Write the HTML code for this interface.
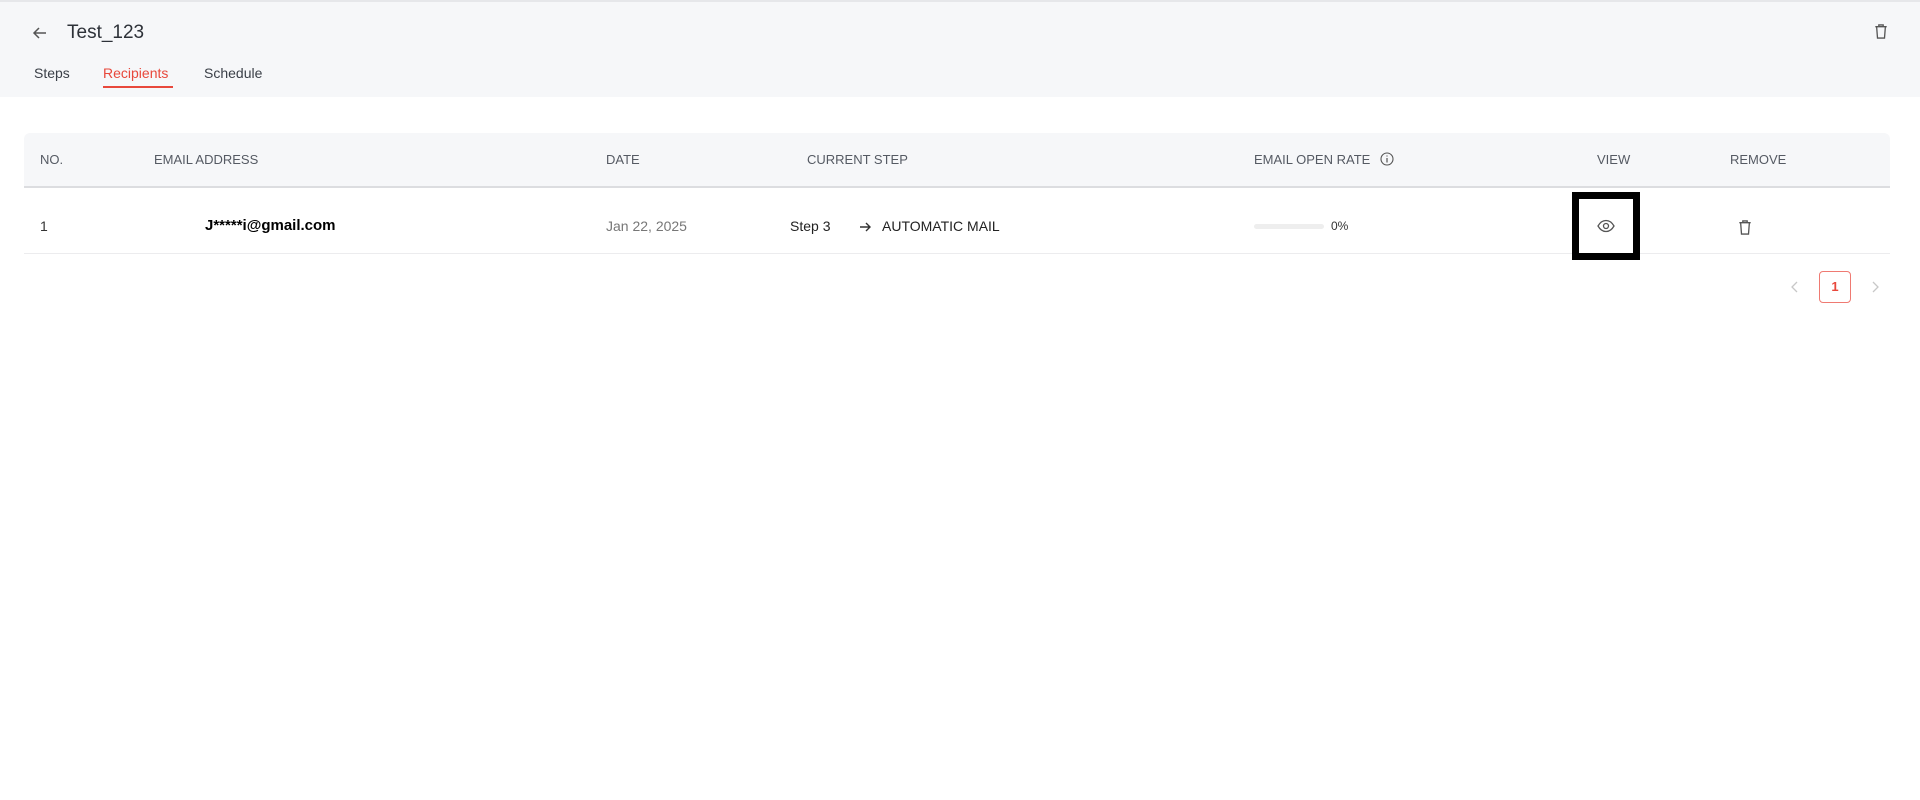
<!DOCTYPE html>
<html><head><meta charset="utf-8"><style>
*{margin:0;padding:0;box-sizing:border-box}
body{width:1920px;height:800px;background:#fff;font-family:"Liberation Sans","DejaVu Sans",sans-serif;position:relative;overflow:hidden;color:#333}
.hdr{position:absolute;left:0;top:0;width:1920px;height:97px;background:#f6f7f9;border-top:2px solid #e6e7ea}
.a{position:absolute;white-space:nowrap}
.th{font-size:13px;color:#555a63;top:152px}
.td{font-size:14px;top:218px}
</style></head><body>
<div class="hdr"></div>
<svg class="a" style="left:31px;top:24px" width="18" height="18" viewBox="0 0 18 18"><path d="M15 9H3M8 4L3 9l5 5" fill="none" stroke="#555" stroke-width="1.5"/></svg>
<div class="a" style="left:67px;top:22px;font-size:19px;color:#2d3138">Test_123</div>
<svg class="a" style="left:1874px;top:23px" width="14" height="17" viewBox="0 0 16 18"><path d="M1.5 3.5h13M5.5 3.5V1.5h5v2M3 3.5l1 13h8l1-13" fill="none" stroke="#555" stroke-width="1.5"/></svg>
<div class="a" style="left:34px;top:65px;font-size:14px;color:#3a3f47">Steps</div>
<div class="a" style="left:103px;top:65px;font-size:14px;color:#e8483c">Recipients</div>
<div class="a" style="left:103px;top:86px;width:70px;height:2px;background:#e8483c"></div>
<div class="a" style="left:204px;top:65px;font-size:14px;color:#3a3f47">Schedule</div>

<div class="a" style="left:24px;top:133px;width:1866px;height:55px;background:#f6f7f9;border-radius:6px 6px 0 0;border-bottom:2px solid #dcdde0"></div>
<div class="a th" style="left:40px">NO.</div>
<div class="a th" style="left:154px">EMAIL ADDRESS</div>
<div class="a th" style="left:606px">DATE</div>
<div class="a th" style="left:807px">CURRENT STEP</div>
<div class="a th" style="left:1254px">EMAIL OPEN RATE</div>
<svg class="a" style="left:1380px;top:152px" width="14" height="14" viewBox="0 0 14 14"><circle cx="7" cy="7" r="6" fill="none" stroke="#555" stroke-width="1.1"/><path d="M7 6v4.5M7 3.5v1" stroke="#555" stroke-width="1.2"/></svg>
<div class="a th" style="left:1597px">VIEW</div>
<div class="a th" style="left:1730px">REMOVE</div>

<div class="a" style="left:24px;top:253px;width:1866px;height:1px;background:#ececee"></div>
<div class="a td" style="left:40px;color:#333">1</div>
<div class="a td" style="left:205px;font-weight:bold;color:#000;font-size:15px;top:217px">J*****i@gmail.com</div>
<div class="a td" style="left:606px;color:#777">Jan 22, 2025</div>
<div class="a td" style="left:790px;color:#222">Step 3</div>
<svg class="a" style="left:858px;top:220px" width="14" height="14" viewBox="0 0 14 14"><path d="M2 7h10M8 3l4 4-4 4" fill="none" stroke="#333" stroke-width="1.4"/></svg>
<div class="a td" style="left:882px;color:#222">AUTOMATIC MAIL</div>
<div class="a" style="left:1254px;top:224px;width:70px;height:5px;border-radius:3px;background:#eeeeee"></div>
<div class="a" style="left:1331px;top:219px;font-size:12px;color:#333">0%</div>
<div class="a" style="left:1572px;top:192px;width:68px;height:68px;border:7px solid #000"></div>
<svg class="a" style="left:1597px;top:219px" width="18" height="14" viewBox="0 0 18 14"><path d="M1 7c2-3.5 5-5.5 8-5.5s6 2 8 5.5c-2 3.5-5 5.5-8 5.5S3 10.5 1 7z" fill="none" stroke="#555" stroke-width="1.3"/><circle cx="9" cy="7" r="2.5" fill="none" stroke="#555" stroke-width="1.3"/></svg>
<svg class="a" style="left:1738px;top:219px" width="14" height="17" viewBox="0 0 16 18"><path d="M1.5 3.5h13M5.5 3.5V1.5h5v2M3 3.5l1 13h8l1-13" fill="none" stroke="#555" stroke-width="1.5"/></svg>
<svg class="a" style="left:1790px;top:281px" width="10" height="12" viewBox="0 0 10 12"><path d="M7 1L2 6l5 5" fill="none" stroke="#c8c8c8" stroke-width="1.3"/></svg>
<div class="a" style="left:1819px;top:271px;width:32px;height:32px;border:1px solid #ef7a72;border-radius:4px;color:#e8483c;font-size:13px;font-weight:bold;text-align:center;line-height:30px">1</div>
<svg class="a" style="left:1870px;top:281px" width="10" height="12" viewBox="0 0 10 12"><path d="M3 1l5 5-5 5" fill="none" stroke="#c8c8c8" stroke-width="1.3"/></svg>
</body></html>
